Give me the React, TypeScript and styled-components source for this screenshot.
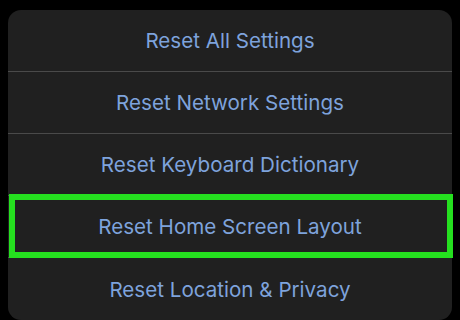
import React from "react";
import styled, { createGlobalStyle } from "styled-components";

const Global = createGlobalStyle`
  html, body { margin: 0; padding: 0; background: #000; }
  body { width: 460px; height: 320px; overflow: hidden; }
`;

const Screen = styled.div`
  width: 460px;
  height: 320px;
  background: #000;
  padding: 10px 8px 0 8px;
  box-sizing: border-box;
`;

const Sheet = styled.div`
  background: #202020;
  border-radius: 13px;
  display: flex;
  flex-direction: column;
  height: 310px;
`;

const Row = styled.div<{ $last?: boolean }>`
  position: relative;
  height: 62px;
  display: flex;
  align-items: center;
  justify-content: center;
  border-bottom: ${(p) => (p.$last ? "none" : "1px solid #4a4a4a")};
  box-sizing: border-box;
  font-family: Inter, "Liberation Sans", sans-serif;
  font-size: 20.6px;
  color: #7ea3dc;
`;

const Highlight = styled.div`
  position: absolute;
  left: 1px;
  right: -1px;
  top: -2px;
  bottom: -1px;
  border: 6px solid #25e01f;
  pointer-events: none;
`;

const items = [
  "Reset All Settings",
  "Reset Network Settings",
  "Reset Keyboard Dictionary",
  "Reset Home Screen Layout",
  "Reset Location & Privacy",
];

export default function App() {
  return (
    <>
      <Global />
      <Screen>
        <Sheet>
          {items.map((t, i) => (
            <Row key={t} $last={i === items.length - 1}>
              {t}
              {i === 3 && <Highlight />}
            </Row>
          ))}
        </Sheet>
      </Screen>
    </>
  );
}
